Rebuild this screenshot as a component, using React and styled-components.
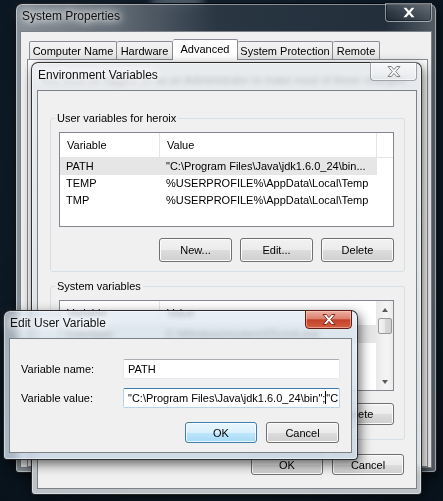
import React from 'react';
import styled, {createGlobalStyle, css} from 'styled-components';

const GlobalStyle = createGlobalStyle`
  html, body {
    margin: 0;
    padding: 0;
    overflow: hidden;
    background: #0e1b27;
  }
  body {
    font-family: "Liberation Sans", Arial, sans-serif;
    font-size: 11px;
    color: #000;
  }
`;

const Desktop = styled.div`
  position: relative;
  width: 443px;
  height: 501px;
  overflow: hidden;
  background: radial-gradient(ellipse at 50% 35%, #1a2b3b 0%, #0f1d2a 55%, #08121b 100%);
`;

// soft light patch of the desktop that shows through the glass frame
const DesktopGlow = styled.div`
  position: absolute;
  left: 150px;
  top: -4px;
  width: 55px;
  height: 12px;
  border-radius: 50%;
  background: rgba(170, 185, 200, 0.45);
  filter: blur(3px);
`;

const tints = {
  dark: css`
    background: linear-gradient(90deg, rgba(142, 150, 158, 0.95) 0%, rgba(112, 121, 130, 0.9) 22%,
      rgba(46, 58, 70, 0.85) 48%, rgba(38, 50, 62, 0.85) 88%, rgba(92, 101, 110, 0.9) 100%);
  `,
  light: css`
    background: linear-gradient(180deg, rgba(226, 229, 233, 0.8), rgba(214, 218, 222, 0.88));
  `,
  active: css`
    background: linear-gradient(180deg, rgba(222, 232, 242, 0.72), rgba(200, 214, 228, 0.85));
  `,
};

const Win = styled.div`
  position: absolute;
  left: ${p => p.$x}px;
  top: ${p => p.$y}px;
  width: ${p => p.$w}px;
  height: ${p => p.$h}px;
  box-sizing: border-box;
  display: flex;
  flex-direction: column;
  padding: 0 ${p => p.$pr}px ${p => p.$pb}px ${p => p.$pl}px;
  border: 1px solid rgba(0, 0, 0, 0.8);
  border-radius: 7px 7px 4px 4px;
  box-shadow: inset 0 0 0 1px rgba(255, 255, 255, 0.45), 2px 4px 12px rgba(0, 0, 0, 0.6);
  backdrop-filter: blur(2.5px);
  ${p => tints[p.$tint]}
`;

const TitleBar = styled.div`
  height: 27px;
  flex: none;
  display: flex;
  align-items: flex-start;
`;

const Title = styled.span`
  margin: 5px 0 0 ${p => p.$indent}px;
  font-size: 12px;
  line-height: 14px;
  color: #111;
  text-shadow: 0 0 6px #fff, 0 0 10px #fff, 0 0 14px rgba(255, 255, 255, 0.9);
`;

const closeVariants = {
  dark: css`
    background: linear-gradient(180deg, rgba(255, 255, 255, 0.14), rgba(255, 255, 255, 0.03) 50%, rgba(0, 0, 0, 0.12));
    border: 1px solid rgba(205, 214, 222, 0.6);
    box-shadow: inset 0 0 0 1px rgba(0, 0, 0, 0.35);
  `,
  light: css`
    background: linear-gradient(180deg, rgba(255, 255, 255, 0.6), rgba(232, 235, 238, 0.4));
    border: 1px solid rgba(90, 100, 110, 0.55);
    box-shadow: inset 0 0 0 1px rgba(255, 255, 255, 0.6);
  `,
  red: css`
    background: linear-gradient(180deg, #eab0a3 0%, #dc8170 45%, #c4402a 52%, #d2603f 100%);
    border: 1px solid #5e1c12;
    box-shadow: inset 0 0 0 1px rgba(255, 205, 195, 0.55);
  `,
};

const CloseBtn = styled.div`
  margin: -1px 0 0 auto;
  width: 47px;
  height: 19px;
  box-sizing: border-box;
  border-radius: 0 0 4px 4px;
  display: flex;
  align-items: center;
  justify-content: center;
  ${p => closeVariants[p.$variant]}
`;

const glyphColors = {
  dark: {fill: '#fff', stroke: 'rgba(0,0,0,0.5)', sw: 0.6},
  light: {fill: '#f7f7f7', stroke: '#767676', sw: 0.9},
  red: {fill: '#fff', stroke: '#7a2317', sw: 0.9},
};

const CloseGlyph = ({variant}) => {
  const c = glyphColors[variant];
  return (
    <svg width="14" height="11" viewBox="0 0 14 11">
      <path
        d="M1 .5h3.4L7 3.6 9.6.5H13L8.8 5.5 13 10.5H9.6L7 7.4 4.4 10.5H1l4.2-5z"
        fill={c.fill}
        stroke={c.stroke}
        strokeWidth={c.sw}
        strokeLinejoin="round"
      />
    </svg>
  );
};

const Client = styled.div`
  flex: 1;
  min-height: 0;
  box-sizing: border-box;
  background: #f0f0f0;
  border: 1px solid rgba(45, 55, 65, 0.6);
  display: flex;
  flex-direction: column;
  overflow: hidden;
`;

const Window = ({title, closeVariant, indent = 1, children, ...frame}) => (
  <Win {...frame}>
    <TitleBar>
      <Title $indent={indent}>{title}</Title>
      <CloseBtn $variant={closeVariant}>
        <CloseGlyph variant={closeVariant} />
      </CloseBtn>
    </TitleBar>
    <Client>{children}</Client>
  </Win>
);

/* ---------- System Properties ---------- */

const SPBody = styled.div`
  flex: 1;
  display: flex;
  flex-direction: column;
  padding: 7px 3px 0 6px;
`;

const TabStrip = styled.div`
  height: 21px;
  display: flex;
  align-items: flex-end;
  padding-left: 2px;
  margin-bottom: -1px;
  position: relative;
  z-index: 1;
`;

const Tab = styled.div`
  width: ${p => p.$w}px;
  box-sizing: border-box;
  height: ${p => (p.$active ? 21 : 18)}px;
  margin-bottom: ${p => (p.$active ? 0 : 1)}px;
  padding-top: 2px;
  line-height: 14px;
  text-align: center;
  white-space: nowrap;
  border: 1px solid #898c95;
  border-bottom: none;
  border-radius: 2px 2px 0 0;
  background: ${p => (p.$active ? '#fff' : 'linear-gradient(180deg, #f3f3f3, #e6e6e6)')};
  & + & {
    border-left: ${p => (p.$active ? '1px solid #898c95' : 'none')};
  }
`;

const TabPanel = styled.div`
  flex: 1;
  background: #fff;
  border: 1px solid #898c95;
  padding: 13px 12px;
`;

const Notice = styled.div`
  line-height: 14px;
  white-space: nowrap;
`;

/* ---------- Environment Variables ---------- */

const EnvBody = styled.div`
  flex: 1;
  display: flex;
  flex-direction: column;
  padding: 20px 11px 0 12px;
`;

const Group = styled.fieldset`
  margin: ${p => p.$top}px 0 0;
  padding: 7px 10px ${p => p.$bottom}px 8px;
  border: 1px solid #d5dfe5;
  border-radius: 3px;
  min-width: 0;
`;

const Legend = styled.legend`
  padding: 0 2px;
  margin-left: -4px;
  line-height: 14px;
`;

const ListBox = styled.div`
  height: ${p => p.$h}px;
  box-sizing: border-box;
  border: 1px solid #828790;
  background: #fff;
  display: flex;
  overflow: hidden;
`;

const ListMain = styled.div`
  flex: 1;
  min-width: 0;
`;

const HeaderRow = styled.div`
  height: 24px;
  display: grid;
  grid-template-columns: 100px 217px 1fr;
  border-bottom: 1px solid #e5e5e5;
`;

const HeaderCell = styled.div`
  padding-left: 7px;
  line-height: 24px;
  border-right: 1px solid #e5e5e5;
  &:last-child {
    border-right: none;
  }
`;

const Row = styled.div`
  width: 317px;
  height: 17px;
  display: grid;
  grid-template-columns: 100px 217px;
  line-height: 17px;
  background: ${p => (p.$selected ? '#e6e6e6' : 'transparent')};
`;

const Cell = styled.div`
  padding-left: 6px;
  white-space: nowrap;
  overflow: hidden;
`;

const ScrollBar = styled.div`
  width: 17px;
  flex: none;
  display: flex;
  flex-direction: column;
  align-items: center;
  background: linear-gradient(90deg, #e8e8e8, #f5f5f5 60%, #ececec);
`;

const Arrow = styled.div`
  height: 17px;
  display: flex;
  align-items: center;
  justify-content: center;
  &::before {
    content: '';
    border-left: 3.5px solid transparent;
    border-right: 3.5px solid transparent;
    ${p => (p.$down ? 'border-top: 4px solid #5a5a5a;' : 'border-bottom: 4px solid #5a5a5a;')}
  }
`;

const Thumb = styled.div`
  width: 14px;
  height: 16px;
  box-sizing: border-box;
  border: 1px solid #999;
  border-radius: 2px;
  background: linear-gradient(90deg, #f3f3f3, #e8e8e8 50%, #d8d8d8 50%, #d0d0d0);
`;

const Spacer = styled.div`
  flex: 1;
`;

const ButtonRow = styled.div`
  display: flex;
  justify-content: flex-end;
  gap: ${p => p.$gap || 8}px;
  margin-top: ${p => p.$top}px;
  padding-right: ${p => p.$right || 0}px;
`;

const Button = styled.div`
  width: ${p => p.$w || 73}px;
  height: ${p => p.$h || 21}px;
  box-sizing: border-box;
  border-radius: 3px;
  display: flex;
  align-items: center;
  justify-content: center;
  border: 1px solid ${p => (p.$default ? '#3c7fb1' : '#707070')};
  background: ${p =>
    p.$default
      ? 'linear-gradient(180deg, #eaf6fd 0%, #d9f0fc 50%, #bee6fd 50%, #a7d9f5 100%)'
      : 'linear-gradient(180deg, #f2f2f2 0%, #ebebeb 50%, #dddddd 50%, #cfcfcf 100%)'};
  box-shadow: inset 0 0 0 1px ${p => (p.$default ? 'rgba(255,255,255,0.75)' : '#fcfcfc')};
`;

/* ---------- Edit User Variable ---------- */

const EditBody = styled.div`
  flex: 1;
  display: flex;
  flex-direction: column;
  padding: 20px 11px 0 11px;
`;

const FieldRow = styled.div`
  display: flex;
  align-items: center;
  margin-top: ${p => p.$top}px;
`;

const FieldLabel = styled.div`
  width: 102px;
  flex: none;
`;

const Input = styled.div`
  flex: 1;
  min-width: 0;
  height: 20px;
  box-sizing: border-box;
  padding-left: 4px;
  line-height: 18px;
  white-space: nowrap;
  overflow: hidden;
  background: #fff;
  border: 1px solid ${p => (p.$focused ? '#b6d3ee' : '#e3e9ef')};
  border-top-color: ${p => (p.$focused ? '#3d7bad' : '#abadb3')};
  border-radius: 2px;
`;

const Caret = styled.span`
  display: inline-block;
  width: 1px;
  height: 13px;
  background: #000;
  vertical-align: -2px;
`;

const userVars = [
  {name: 'PATH', value: '"C:\\Program Files\\Java\\jdk1.6.0_24\\bin...', selected: true},
  {name: 'TEMP', value: '%USERPROFILE%\\AppData\\Local\\Temp'},
  {name: 'TMP', value: '%USERPROFILE%\\AppData\\Local\\Temp'},
];

const systemVars = [
  {name: 'ComSpec', value: 'C:\\Windows\\system32\\cmd.exe', selected: true},
  {name: 'FP_NO_HOST_C...', value: 'NO'},
  {name: 'NUMBER_OF_P...', value: '2'},
  {name: 'OS', value: 'Windows_NT'},
];

const VarList = ({rows, height, scroll}) => (
  <ListBox $h={height}>
    <ListMain>
      <HeaderRow>
        <HeaderCell>Variable</HeaderCell>
        <HeaderCell>Value</HeaderCell>
        <HeaderCell />
      </HeaderRow>
      {rows.map(r => (
        <Row key={r.name} $selected={r.selected}>
          <Cell>{r.name}</Cell>
          <Cell>{r.value}</Cell>
        </Row>
      ))}
    </ListMain>
    {scroll && (
      <ScrollBar>
        <Arrow />
        <Thumb />
        <Spacer />
        <Arrow $down />
      </ScrollBar>
    )}
  </ListBox>
);

export default function App() {
  return (
    <Desktop>
      <GlobalStyle />
      <DesktopGlow />

      <Window
        title="System Properties"
        closeVariant="dark"
        indent={2}
        $tint="dark"
        $x={15}
        $y={3}
        $w={422}
        $h={470}
        $pl={4}
        $pr={4}
        $pb={4}
      >
        <SPBody>
          <TabStrip>
            <Tab $w={88}>Computer Name</Tab>
            <Tab $w={56}>Hardware</Tab>
            <Tab $w={65} $active>Advanced</Tab>
            <Tab $w={95}>System Protection</Tab>
            <Tab $w={47}>Remote</Tab>
          </TabStrip>
          <TabPanel>
            <Notice>You must be logged on as an Administrator to make most of these changes.</Notice>
          </TabPanel>
        </SPBody>
      </Window>

      <Window
        title="Environment Variables"
        closeVariant="light"
        $tint="light"
        $x={31}
        $y={62}
        $w={391}
        $h={433}
        $pl={5}
        $pr={4}
        $pb={5}
      >
        <EnvBody>
          <Group $top={0} $bottom={9}>
            <Legend>User variables for heroix</Legend>
            <VarList rows={userVars} height={95} />
            <ButtonRow $top={11}>
              <Button $h={24}>New...</Button>
              <Button $h={24}>Edit...</Button>
              <Button $h={24}>Delete</Button>
            </ButtonRow>
          </Group>
          <Group $top={7} $bottom={14}>
            <Legend>System variables</Legend>
            <VarList rows={systemVars} height={91} scroll />
            <ButtonRow $top={12}>
              <Button $h={22}>New...</Button>
              <Button $h={22}>Edit...</Button>
              <Button $h={22}>Delete</Button>
            </ButtonRow>
          </Group>
          <ButtonRow $top={14} $gap={9} $right={1}>
            <Button $w={72}>OK</Button>
            <Button $w={72}>Cancel</Button>
          </ButtonRow>
        </EnvBody>
      </Window>

      <Window
        title="Edit User Variable"
        closeVariant="red"
        $tint="active"
        $x={3}
        $y={310}
        $w={355}
        $h={150}
        $pl={5}
        $pr={5}
        $pb={6}
      >
        <EditBody>
          <FieldRow $top={0}>
            <FieldLabel>Variable name:</FieldLabel>
            <Input>PATH</Input>
          </FieldRow>
          <FieldRow $top={9}>
            <FieldLabel>Variable value:</FieldLabel>
            <Input $focused>
              "C:\Program Files\Java\jdk1.6.0_24\bin";<Caret />"C:\Program Files\Java\jre6\bin"
            </Input>
          </FieldRow>
          <ButtonRow $top={14} $gap={9} $right={1}>
            <Button $w={72} $default>OK</Button>
            <Button $w={73}>Cancel</Button>
          </ButtonRow>
        </EditBody>
      </Window>
    </Desktop>
  );
}
